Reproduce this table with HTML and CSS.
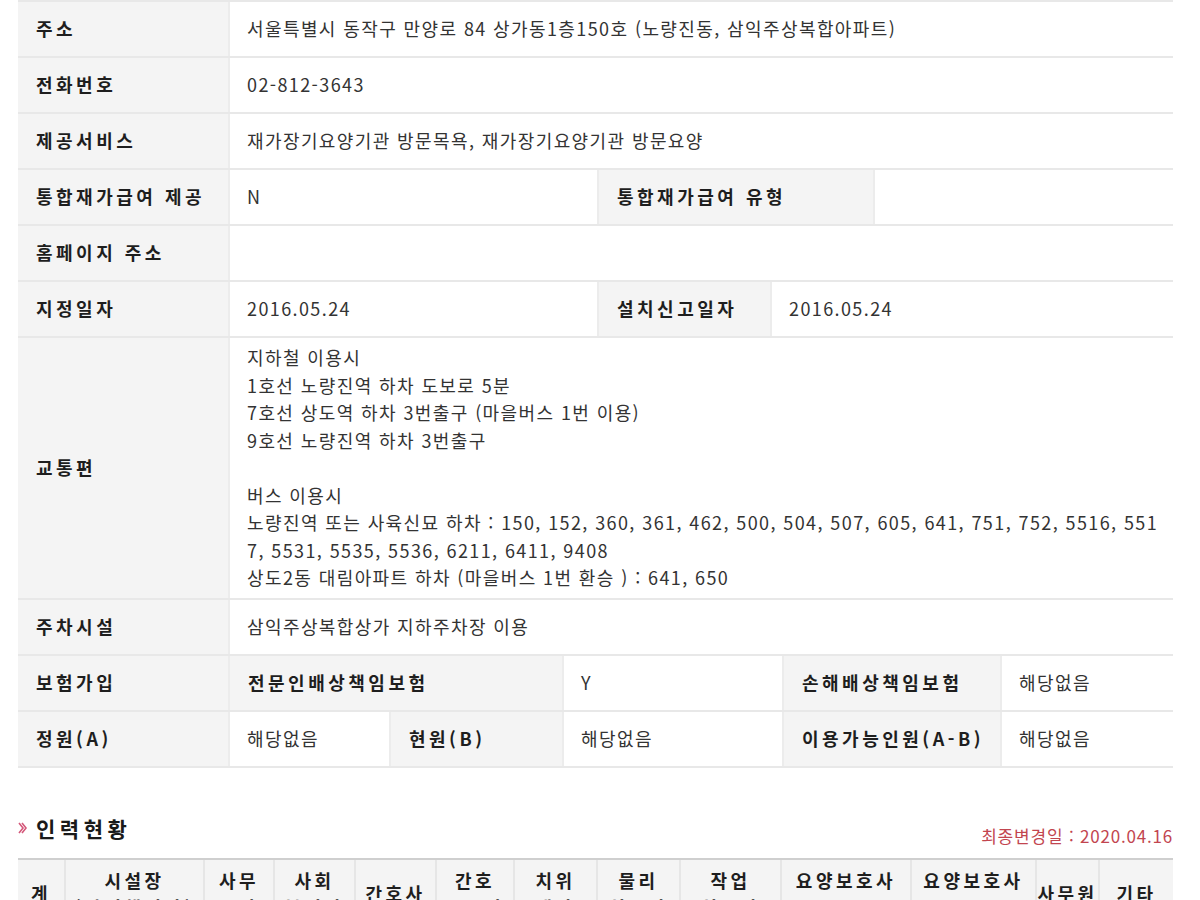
FILE: index.html
```html
<!DOCTYPE html>
<html lang="ko">
<head>
<meta charset="utf-8">
<title>기관 정보</title>
<link rel="stylesheet" href="styles.css">
</head>
<body>
<div class="page">
  <div class="info">
    <div class="row cols-2">
      <div class="th">주소</div>
      <div class="td">서울특별시 동작구 만양로 84 상가동1층150호 (노량진동, 삼익주상복합아파트)</div>
    </div>
    <div class="row cols-2">
      <div class="th">전화번호</div>
      <div class="td">02-812-3643</div>
    </div>
    <div class="row cols-2">
      <div class="th">제공서비스</div>
      <div class="td">재가장기요양기관 방문목욕, 재가장기요양기관 방문요양</div>
    </div>
    <div class="row cols-integ">
      <div class="th">통합재가급여 제공</div>
      <div class="td">N</div>
      <div class="th">통합재가급여 유형</div>
      <div class="td"></div>
    </div>
    <div class="row cols-2">
      <div class="th">홈페이지 주소</div>
      <div class="td"></div>
    </div>
    <div class="row cols-date">
      <div class="th">지정일자</div>
      <div class="td">2016.05.24</div>
      <div class="th">설치신고일자</div>
      <div class="td">2016.05.24</div>
    </div>
    <div class="row cols-2">
      <div class="th">교통편</div>
      <div class="td multi">지하철 이용시<br>1호선 노량진역 하차 도보로 5분<br>7호선 상도역 하차 3번출구 (마을버스 1번 이용)<br>9호선 노량진역 하차 3번출구<br><br>버스 이용시<br>노량진역 또는 사육신묘 하차 : 150, 152, 360, 361, 462, 500, 504, 507, 605, 641, 751, 752, 5516, 5517, 5531, 5535, 5536, 6211, 6411, 9408<br>상도2동 대림아파트 하차 (마을버스 1번 환승 ) : 641, 650</div>
    </div>
    <div class="row cols-2">
      <div class="th">주차시설</div>
      <div class="td">삼익주상복합상가 지하주차장 이용</div>
    </div>
    <div class="row cols-ins">
      <div class="th">보험가입</div>
      <div class="th">전문인배상책임보험</div>
      <div class="td">Y</div>
      <div class="th">손해배상책임보험</div>
      <div class="td">해당없음</div>
    </div>
    <div class="row cols-cap">
      <div class="th">정원(A)</div>
      <div class="td">해당없음</div>
      <div class="th">현원(B)</div>
      <div class="td">해당없음</div>
      <div class="th">이용가능인원(A-B)</div>
      <div class="td">해당없음</div>
    </div>
  </div>

  <div class="section-head">
    <h2 class="section-title">
      <svg class="bullet" width="10" height="14" viewBox="0 0 10 14" aria-hidden="true">
        <polyline points="1,2 5,7 1,12" fill="none" stroke="#d4587a" stroke-width="1.6"/>
        <polyline points="4,2 8,7 4,12" fill="none" stroke="#d4587a" stroke-width="1.6"/>
      </svg>
      인력현황
    </h2>
    <span class="updated">최종변경일 : 2020.04.16</span>
  </div>

  <div class="staff">
    <div class="staff-head">
      <div class="sh single">계</div>
      <div class="sh">시설장<br>(관리책임자)</div>
      <div class="sh">사무<br>국장</div>
      <div class="sh">사회<br>복지사</div>
      <div class="sh single">간호사</div>
      <div class="sh">간호<br>조무사</div>
      <div class="sh">치위<br>생사</div>
      <div class="sh">물리<br>치료사</div>
      <div class="sh">작업<br>치료사</div>
      <div class="sh">요양보호사<br>1급</div>
      <div class="sh">요양보호사<br>2급</div>
      <div class="sh single">사무원</div>
      <div class="sh single">기타</div>
    </div>
    <div class="staff-row">
      <div class="sd">2</div><div class="sd">1</div><div class="sd">0</div><div class="sd">0</div><div class="sd">0</div><div class="sd">0</div><div class="sd">0</div><div class="sd">0</div><div class="sd">0</div><div class="sd">1</div><div class="sd">0</div><div class="sd">0</div><div class="sd">0</div>
    </div>
  </div>
</div>
</body>
</html>
```

FILE: styles.css
```css
html, body {
  margin: 0;
  padding: 0;
  background: #ffffff;
}

body {
  font-family: "Noto Sans CJK KR", "Noto Sans", sans-serif;
  font-size: 18px;
  color: #333333;
}

.page {
  width: 1155px;
  margin-left: 18px;
  padding-bottom: 40px;
}

.info {
  border-top: 2px solid #e8e8e8;
}

.row {
  display: grid;
  border-bottom: 2px solid #e8e8e8;
}

.cols-2 { grid-template-columns: 210px 1fr; }
.cols-integ { grid-template-columns: 210px 369px 276px 1fr; }
.cols-date { grid-template-columns: 210px 369px 173px 1fr; }
.cols-ins { grid-template-columns: 210px 334px 220px 218px 1fr; }
.cols-cap { grid-template-columns: 210px 161px 173px 220px 218px 1fr; }

.th, .td {
  min-height: 54px;
  display: flex;
  align-items: center;
  line-height: 27.5px;
  box-sizing: border-box;
}

.th {
  background: #f4f4f4;
  font-weight: 700;
  color: #1e1e1e;
  letter-spacing: 3.5px;
  padding: 0 4px 0 18px;
  white-space: nowrap;
}

.td {
  background: #ffffff;
  padding: 0 12px 0 17px;
  letter-spacing: 1.4px;
}

.row > div + div {
  border-left: 2px solid #ececec;
}

.td.multi {
  display: block;
  padding: 6px 10px 6px 17px;
  word-break: break-all;
}

.section-head {
  display: flex;
  align-items: center;
  justify-content: space-between;
  margin-top: 40px;
  height: 40px;
}

.section-title {
  margin: 0;
  display: flex;
  align-items: center;
  gap: 8px;
  font-size: 21px;
  font-weight: 700;
  color: #1a1a1a;
  letter-spacing: 4.5px;
}

.bullet {
  flex: none;
}

.updated {
  color: #c2454f;
  font-size: 17px;
  padding-top: 16px;
  letter-spacing: 0.8px;
}

.staff {
  margin-top: 10px;
  border-top: 2px solid #cfcfcf;
}

.staff-head, .staff-row {
  display: grid;
  grid-template-columns: 46px 139px 70px 81px 81px 78px 83px 83px 101px 130px 125px 63px 1fr;
}

.staff-head {
  background: #f4f4f4;
  border-bottom: 2px solid #e8e8e8;
}

.sh {
  font-weight: 700;
  color: #1e1e1e;
  text-align: center;
  letter-spacing: 3.5px;
  line-height: 27.5px;
  padding: 7px 0;
  display: flex;
  align-items: center;
  justify-content: center;
  white-space: nowrap;
}

.staff-head > .sh + .sh,
.staff-row > .sd + .sd {
  border-left: 2px solid #e6e6e6;
}

.staff-row {
  border-bottom: 2px solid #e8e8e8;
}

.sd {
  text-align: center;
  padding: 14px 0;
  line-height: 27px;
}
```
